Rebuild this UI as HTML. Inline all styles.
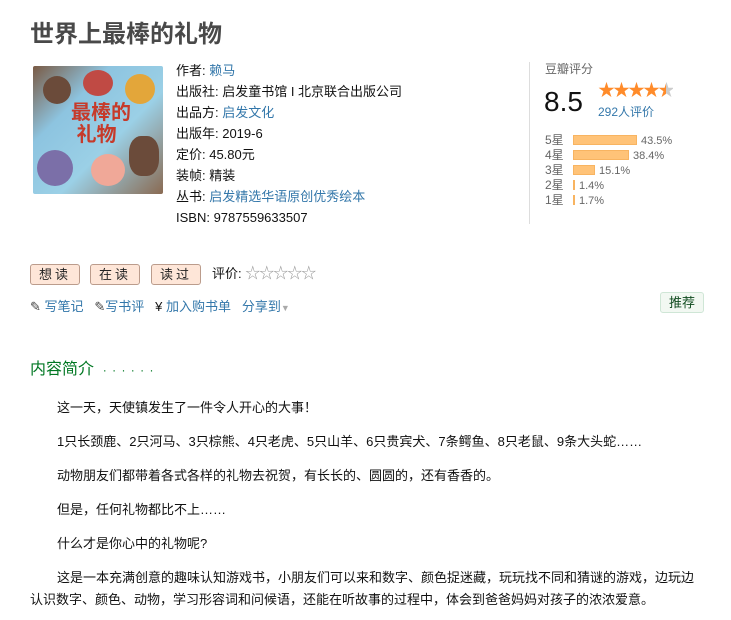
<!DOCTYPE html>
<html><head><meta charset="utf-8"><style>
*{margin:0;padding:0;box-sizing:border-box}
body{width:731px;height:620px;overflow:hidden;background:#fff;font-family:"Liberation Sans","Noto Sans CJK SC",sans-serif;font-size:13px;color:#111;position:relative}
.a{position:absolute;white-space:nowrap}
a,.l{color:#37a;text-decoration:none}
h1{position:absolute;left:30px;top:14px;font-size:24px;font-weight:bold;color:#494949;font-family:"Liberation Sans","Noto Sans CJK SC",sans-serif}
.info div{height:21px;line-height:21px}
.btn{position:absolute;top:264px;height:21px;width:50px;border:1px solid #bb9c8c;border-radius:3px;background:#fee6d8;text-align:center;line-height:19px;letter-spacing:3px;font-size:13px;color:#222}
.bar{position:absolute;left:573px;height:10px;background:#ffc378;border:1px solid #f8b461}
.bl{position:absolute;left:545px;font-size:12px;color:#666;line-height:15px}
.pc{position:absolute;font-size:11px;color:#666;line-height:15px}
p{position:absolute;left:57px;font-size:13px;color:#111;white-space:nowrap}
</style></head><body>
<h1>世界上最棒的礼物</h1>
<div class="a" style="left:33px;top:66px;width:130px;height:128px;background:linear-gradient(135deg,#7a5a44,#8dc4e0 30%,#9bd0e6 60%,#8a6a52);border-radius:2px;overflow:hidden">
<div class="a" style="left:10px;top:10px;width:28px;height:28px;border-radius:50%;background:#6b4b3a"></div>
<div class="a" style="left:50px;top:4px;width:30px;height:26px;border-radius:50%;background:#c04a44"></div>
<div class="a" style="left:92px;top:8px;width:30px;height:30px;border-radius:50%;background:#e3a63a"></div>
<div class="a" style="left:4px;top:84px;width:36px;height:36px;border-radius:50%;background:#7b6fa8"></div>
<div class="a" style="left:96px;top:70px;width:30px;height:40px;border-radius:40%;background:#6b4b3a"></div>
<div class="a" style="left:58px;top:88px;width:34px;height:32px;border-radius:50%;background:#f0a898"></div>
<div class="a" style="left:38px;top:36px;font-size:20px;font-weight:bold;color:#c63a2a;line-height:22px">最棒的<br>&nbsp;礼物</div>
</div>
<div class="a info" style="left:176px;top:60px">
<div>作者: <a>赖马</a></div>
<div>出版社: 启发童书馆 I 北京联合出版公司</div>
<div>出品方: <a>启发文化</a></div>
<div>出版年: 2019-6</div>
<div>定价: 45.80元</div>
<div>装帧: 精装</div>
<div>丛书: <a>启发精选华语原创优秀绘本</a></div>
<div>ISBN: 9787559633507</div>
</div>
<div class="a" style="left:529px;top:62px;width:1px;height:162px;background:#ddd"></div>
<div class="a" style="left:545px;top:60px;color:#666;font-size:12px">豆瓣评分</div>
<div class="a" style="left:544px;top:86px;font-size:28px;color:#111;line-height:32px">8.5</div>
<div class="a" style="left:598px;top:82px;font-size:17px;color:#ff8b2a;letter-spacing:-2px;line-height:18px">★★★★<span style="background:linear-gradient(90deg,#ff8b2a 55%,#ccc 55%);-webkit-background-clip:text;color:transparent">★</span></div>
<div class="a l" style="left:598px;top:103px;font-size:12px">292人评价</div>
<div class="bl" style="top:133px">5星</div><div class="bar" style="top:135px;width:64px"></div><div class="pc" style="left:641px;top:134px">43.5%</div>
<div class="bl" style="top:148px">4星</div><div class="bar" style="top:150px;width:56px"></div><div class="pc" style="left:633px;top:149px">38.4%</div>
<div class="bl" style="top:163px">3星</div><div class="bar" style="top:165px;width:22px"></div><div class="pc" style="left:599px;top:164px">15.1%</div>
<div class="bl" style="top:178px">2星</div><div class="bar" style="top:180px;width:2px"></div><div class="pc" style="left:579px;top:179px">1.4%</div>
<div class="bl" style="top:193px">1星</div><div class="bar" style="top:195px;width:2px"></div><div class="pc" style="left:579px;top:194px">1.7%</div>
<div class="btn" style="left:30px">想读</div>
<div class="btn" style="left:90px">在读</div>
<div class="btn" style="left:151px">读过</div>
<div class="a" style="left:212px;top:265px;line-height:18px">评价: <span style="color:#999;font-size:15px;letter-spacing:-1px">☆☆☆☆☆</span></div>
<div class="a" style="left:30px;top:298px;line-height:18px"><span style="color:#444">✎</span> <a>写笔记</a>&nbsp;&nbsp;&nbsp;<span style="color:#444">✎</span><a>写书评</a>&nbsp;&nbsp;&nbsp;¥ <a>加入购书单</a>&nbsp;&nbsp;&nbsp;<a>分享到</a><span style="color:#aaa;font-size:9px">▼</span></div>
<div class="a" style="left:660px;top:292px;width:44px;height:21px;border:1px solid #cfe6d6;border-radius:3px;background:#f2f8f2;color:#0f4a1e;text-align:center;line-height:19px;font-size:13px">推荐</div>
<div class="a" style="left:30px;top:359px;font-size:16px;color:#072;line-height:22px">内容简介 <span style="font-size:12px;letter-spacing:1px">&nbsp;· · · · · ·</span></div>
<p style="top:397px">这一天，天使镇发生了一件令人开心的大事！</p>
<p style="top:431px">1只长颈鹿、2只河马、3只棕熊、4只老虎、5只山羊、6只贵宾犬、7条鳄鱼、8只老鼠、9条大头蛇……</p>
<p style="top:465px">动物朋友们都带着各式各样的礼物去祝贺，有长长的、圆圆的，还有香香的。</p>
<p style="top:499px">但是，任何礼物都比不上……</p>
<p style="top:533px">什么才是你心中的礼物呢?</p>
<p style="top:567px">这是一本充满创意的趣味认知游戏书，小朋友们可以来和数字、颜色捉迷藏，玩玩找不同和猜谜的游戏，边玩边</p>
<p style="left:30px;top:589px">认识数字、颜色、动物，学习形容词和问候语，还能在听故事的过程中，体会到爸爸妈妈对孩子的浓浓爱意。</p>
</body></html>
